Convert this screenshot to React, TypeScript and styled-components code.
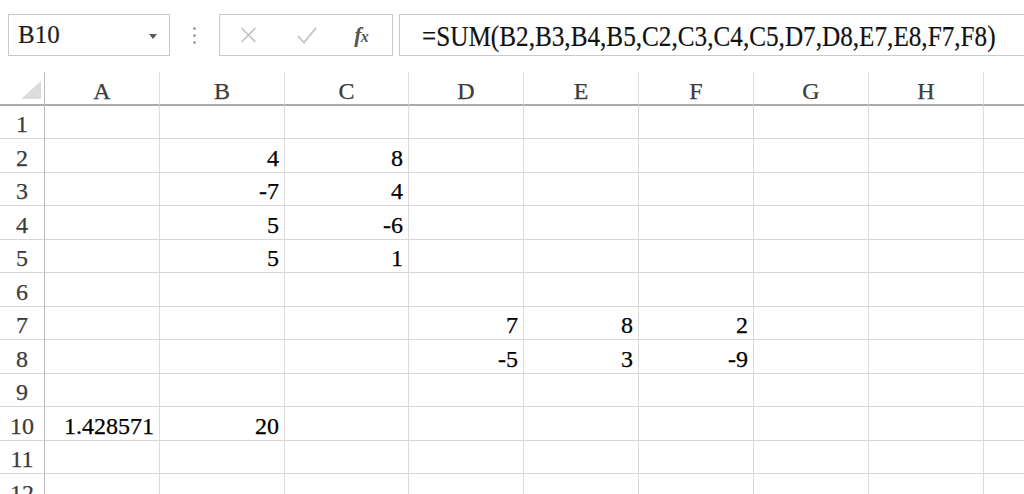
import React from 'react'
import styled, { createGlobalStyle } from 'styled-components'

const SERIF = `'Liberation Serif', 'Times New Roman', Times, serif`

const GlobalStyle = createGlobalStyle`
  html, body {
    margin: 0;
    padding: 0;
    background: #fff;
  }
`

const Sheet = styled.div`
  width: 1024px;
  height: 494px;
  overflow: hidden;
  background: #fff;
  display: flex;
  flex-direction: column;
  font-family: ${SERIF};
`

const Toolbar = styled.div`
  display: flex;
  align-items: flex-start;
  height: 72px;
  flex: none;
  box-sizing: border-box;
  padding: 14px 0 0 8px;
  overflow: hidden;
`

const Box = styled.div`
  height: 42px;
  box-sizing: border-box;
  border: 1px solid #c9c9c9;
  display: flex;
  align-items: center;
  background: #fff;
`

const NameBox = styled(Box)`
  width: 162px;
  justify-content: space-between;
  padding: 0 12px 0 9px;
  font-size: 25px;
  color: #1e1e1e;
  -webkit-text-stroke: 0.2px #1e1e1e;
`

const Caret = styled.span`
  width: 0;
  height: 0;
  border-left: 4px solid transparent;
  border-right: 4px solid transparent;
  border-top: 5px solid #5a5a5a;
  margin-top: 2px;
`

const Grip = styled.div`
  width: 49px;
  height: 42px;
  display: flex;
  flex-direction: column;
  align-items: center;
  justify-content: center;
  gap: 4px;
  span {
    width: 3px;
    height: 3px;
    border-radius: 50%;
    background: #a3a3a3;
  }
`

const ButtonBox = styled(Box)`
  width: 174px;
`

const IconSlot = styled.div<{ $w: number }>`
  width: ${(p) => p.$w}px;
  display: flex;
  align-items: center;
  justify-content: center;
`

const Fx = styled.span`
  font-style: italic;
  font-weight: bold;
  font-size: 22px;
  color: #555;
  letter-spacing: -1px;
  small {
    font-size: 16px;
  }
`

const FormulaBox = styled(Box)`
  flex: 1;
  margin-left: 6px;
  border-right: none;
  padding-left: 22px;
  overflow: hidden;
`

const FormulaText = styled.span`
  display: inline-block;
  font-size: 30px;
  color: #111;
  -webkit-text-stroke: 0.2px #111;
  white-space: nowrap;
  transform: scaleX(0.84);
  transform-origin: left center;
  margin-top: 2px;
`

const Grid = styled.div`
  display: grid;
  grid-template-columns: 45px 115px 125px 124px 115px 115px 115px 115px 115px 115px;
  grid-template-rows: 34px repeat(6, 33px 34px);
`

const Cell = styled.div<{ $align?: 'left' | 'right' | 'center' }>`
  box-sizing: border-box;
  border-right: 1px solid #dadada;
  border-bottom: 1px solid #d6d6d6;
  display: flex;
  align-items: flex-end;
  justify-content: ${(p) => (p.$align === 'right' ? 'flex-end' : p.$align === 'center' ? 'center' : 'flex-start')};
  padding: 0 5px 2px 5px;
  font-size: 24px;
  line-height: 24px;
  color: #000;
  -webkit-text-stroke: 0.25px currentColor;
  white-space: nowrap;
  overflow: hidden;
`

const ColHeader = styled(Cell)`
  border-bottom: 2px solid #ababab;
  border-right-color: #dedede;
  color: #3c3c3c;
  padding-bottom: 1px;
`

const Corner = styled(ColHeader)`
  border-right: 1px solid #bdbdbd;
  padding: 0;
  align-items: stretch;
`

const RowHeader = styled(Cell)`
  border-right: 1px solid #bdbdbd;
  color: #3c3c3c;
  padding-left: 0;
  padding-right: 0;
`

const columns = ['A', 'B', 'C', 'D', 'E', 'F', 'G', 'H', '']

const values: Record<string, string> = {
  B2: '4',
  C2: '8',
  B3: '-7',
  C3: '4',
  B4: '5',
  C4: '-6',
  B5: '5',
  C5: '1',
  D7: '7',
  E7: '8',
  F7: '2',
  D8: '-5',
  E8: '3',
  F8: '-9',
  A10: '1.428571',
  B10: '20',
}

export default function App() {
  const rows = Array.from({ length: 12 }, (_, i) => i + 1)

  return (
    <Sheet>
      <GlobalStyle />
      <Toolbar>
        <NameBox>
          B10
          <Caret />
        </NameBox>
        <Grip>
          <span />
          <span />
          <span />
        </Grip>
        <ButtonBox>
          <IconSlot $w={56}>
            <svg width="17" height="16" viewBox="0 0 17 16">
              <path d="M1.5 1 L15.5 15 M15.5 1 L1.5 15" stroke="#c2c2c2" strokeWidth="1.6" fill="none" />
            </svg>
          </IconSlot>
          <IconSlot $w={62}>
            <svg width="20" height="17" viewBox="0 0 20 17">
              <path d="M1 9 L7 15.5 L19 1" stroke="#c2c2c2" strokeWidth="1.8" fill="none" />
            </svg>
          </IconSlot>
          <IconSlot $w={46}>
            <Fx>
              f<small>x</small>
            </Fx>
          </IconSlot>
        </ButtonBox>
        <FormulaBox>
          <FormulaText>=SUM(B2,B3,B4,B5,C2,C3,C4,C5,D7,D8,E7,E8,F7,F8)</FormulaText>
        </FormulaBox>
      </Toolbar>
      <Grid>
        <Corner>
          <svg width="44" height="32" viewBox="0 0 44 32">
            <polygon points="21,27 41,9 41,27" fill="#dcdcdc" />
          </svg>
        </Corner>
        {columns.map((c, i) => (
          <ColHeader key={i} $align="center">
            {c}
          </ColHeader>
        ))}
        {rows.map((r) => (
          <React.Fragment key={r}>
            <RowHeader $align="center">{r}</RowHeader>
            {columns.map((c, i) => (
              <Cell key={i} $align="right">
                {c ? values[`${c}${r}`] : null}
              </Cell>
            ))}
          </React.Fragment>
        ))}
      </Grid>
    </Sheet>
  )
}
